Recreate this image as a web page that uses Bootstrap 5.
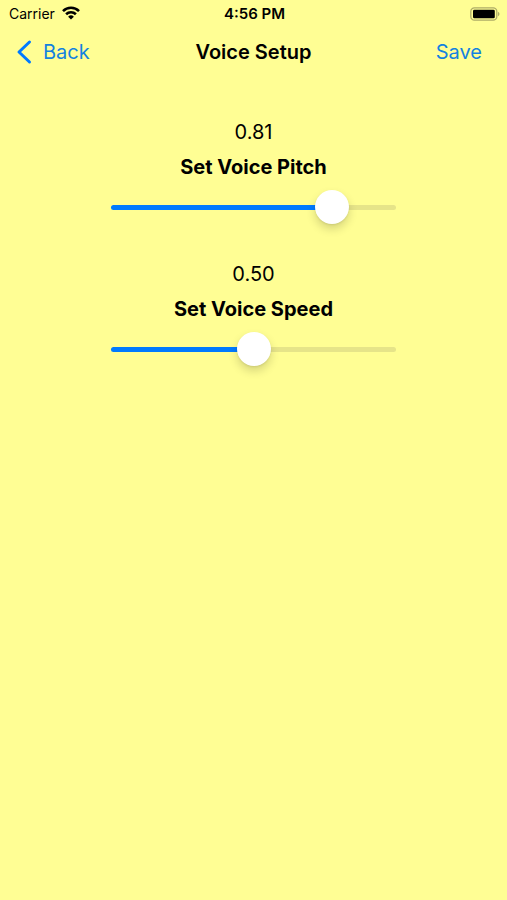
<!DOCTYPE html>
<html lang="en">
<head>
<meta charset="utf-8">
<meta name="viewport" content="width=device-width, initial-scale=1">
<title>Voice Setup</title>
<link href="https://cdn.jsdelivr.net/npm/bootstrap@5.3.0/dist/css/bootstrap.min.css" rel="stylesheet">
<style>
  :root { --ios-blue: #007aff; --nav-blue: #1282e0; }
  body { background: #fffe94; color: #000; font-family: Inter, "Liberation Sans", sans-serif; font-size: 20px; line-height: 24px; }
  .status-bar { font-size: 14px; line-height: 28px; height: 28px; padding: 0 7px 0 9px; }
  .clock { font-size: 15px; }
  .title-bar { height: 48px; padding: 0 17px; }
  .title-bar a, .title-bar button { color: var(--nav-blue); }
  .screen-title, .slider-label { font-size: 20px; line-height: 24px; }
  .settings { width: 56.4%; padding-top: 44px; gap: 27px; }
  .slider-label { margin-top: 11px; }
  .voice-range { height: 56px; --fill: calc(17px + (100% - 34px) * var(--value)); }
  .voice-range::-webkit-slider-runnable-track {
    height: 5px; border-radius: 3px;
    background: linear-gradient(to right, var(--ios-blue) var(--fill), #e6e489 var(--fill));
  }
  .voice-range::-webkit-slider-thumb, .voice-range::-webkit-slider-thumb:active {
    width: 34px; height: 34px; margin-top: -15px; background: #fff; border-radius: 50%;
    box-shadow: 0 5px 10px rgba(0, 0, 0, .16), 0 1px 2px rgba(0, 0, 0, .08);
  }
  .voice-range::-moz-range-track { height: 5px; background: #e6e489; }
  .voice-range::-moz-range-progress { height: 5px; border-radius: 3px; background: var(--ios-blue); }
  .voice-range::-moz-range-thumb { width: 34px; height: 34px; background: #fff; border-radius: 50%; }
</style>
<script src="https://cdn.jsdelivr.net/npm/bootstrap@5.3.0/dist/js/bootstrap.bundle.min.js" defer></script>
</head>
<body class="min-vh-100">
<div class="status-bar row g-0 align-items-center">
  <div class="col d-flex align-items-center">
    <span>Carrier</span>
    <svg class="ms-2 overflow-visible" width="20" height="16" viewBox="2 1 20 16" fill="none" stroke="#000" stroke-width="2.6" role="img" aria-label="Wi-Fi">
      <path d="M2 6.1a11.4 11.4 0 0 1 16 0M5.1 9.3a7 7 0 0 1 9.8 0"/>
      <path d="M10 14.6 7.1 11.8a4.1 4.1 0 0 1 5.8 0z" fill="#000" stroke="none"/>
    </svg>
  </div>
  <div class="clock col-auto fw-semibold">4:56 PM</div>
  <div class="col d-flex justify-content-end">
    <svg width="30" height="14" viewBox="0 0 30 14" role="img" aria-label="Battery full">
      <rect x=".8" y=".8" width="26" height="12.4" rx="3.6" fill="none" stroke="#aeac67" stroke-width="1.3"/>
      <rect x="3" y="2.7" width="21.8" height="8.6" rx="1.4"/>
      <path d="M28 4.8c2 .8 2 3.6 0 4.4z" fill="#aeac67"/>
    </svg>
  </div>
</div>
<header class="title-bar row g-0 align-items-center">
  <div class="col d-flex">
    <a href="#" class="d-flex align-items-center text-decoration-none">
      <svg class="me-2 overflow-visible" width="18" height="24" viewBox="0 0 18 24" fill="none" stroke="#007aff" stroke-width="3" stroke-linecap="round" stroke-linejoin="round" aria-hidden="true"><path d="M12.5 2 2 12l10.5 10"/></svg>
      <span>Back</span>
    </a>
  </div>
  <h1 class="screen-title col-auto fw-semibold mb-0">Voice Setup</h1>
  <div class="col d-flex justify-content-end"><button type="button" class="bg-transparent border-0 p-0 me-2">Save</button></div>
</header>
<main class="settings mx-auto d-flex flex-column text-center">
  <section>
    <output class="d-block" for="pitch">0.81</output>
    <label class="slider-label d-block fw-bold" for="pitch">Set Voice Pitch</label>
    <input type="range" class="voice-range form-range d-block" id="pitch" min="0" max="1" step="0.01" value="0.81" style="--value: .81">
  </section>
  <section>
    <output class="d-block" for="speed">0.50</output>
    <label class="slider-label d-block fw-bold" for="speed">Set Voice Speed</label>
    <input type="range" class="voice-range form-range d-block" id="speed" min="0" max="1" step="0.01" value="0.5" style="--value: .5">
  </section>
</main>
<script>
  document.querySelectorAll('.voice-range').forEach(function (range) {
    range.addEventListener('input', function () {
      range.style.setProperty('--value', range.value);
      range.closest('section').querySelector('output').textContent = Number(range.value).toFixed(2);
    });
  });
</script>
</body>
</html>
